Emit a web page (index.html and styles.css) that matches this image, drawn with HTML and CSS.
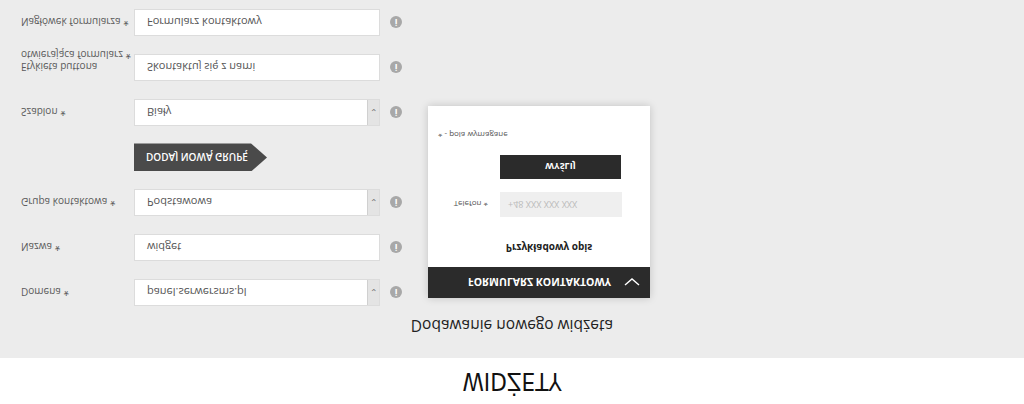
FILE: index.html
```html
<!DOCTYPE html>
<html lang="pl">
<head>
    <meta charset="UTF-8">
    <meta name="viewport" content="width=device-width, initial-scale=1.0">
    <title>Widżety</title>
    <link rel="stylesheet" href="styles.css">
</head>
<body>
    <div class="page">
        <header class="top">
            <h1>WIDŻETY</h1>
        </header>

        <section class="panel">
            <h2>Dodawanie nowego widżeta</h2>

            <div class="content">
                <div class="form">
                    <div class="row">
                        <label>Domena <span class="req">*</span></label>
                        <div class="field select">
                            <span>panel.serwersms.pl</span>
                            <span class="arrow">&#8964;</span>
                        </div>
                        <span class="info">i</span>
                    </div>
                    <div class="row">
                        <label>Nazwa <span class="req">*</span></label>
                        <div class="field"><span>widget</span></div>
                        <span class="info">i</span>
                    </div>
                    <div class="row">
                        <label>Grupa kontaktowa <span class="req">*</span></label>
                        <div class="field select">
                            <span>Podstawowa</span>
                            <span class="arrow">&#8964;</span>
                        </div>
                        <span class="info">i</span>
                    </div>
                    <div class="row">
                        <label></label>
                        <button class="add-group">DODAJ NOWĄ GRUPĘ</button>
                    </div>
                    <div class="row">
                        <label>Szablon <span class="req">*</span></label>
                        <div class="field select">
                            <span>Biały</span>
                            <span class="arrow">&#8964;</span>
                        </div>
                        <span class="info">i</span>
                    </div>
                    <div class="row">
                        <label class="two-lines">Etykieta buttona<br>otwierająca formularz <span class="req">*</span></label>
                        <div class="field"><span>Skontaktuj się z nami</span></div>
                        <span class="info">i</span>
                    </div>
                    <div class="row">
                        <label>Nagłówek formularza <span class="req">*</span></label>
                        <div class="field"><span>Formularz kontaktowy</span></div>
                        <span class="info">i</span>
                    </div>
                </div>

                <div class="preview">
                    <div class="preview-head">
                        <span>FORMULARZ KONTAKTOWY</span>
                        <svg width="16" height="10" viewBox="0 0 16 10"><polyline points="1,2 8,8 15,2" fill="none" stroke="#fff" stroke-width="1.4"/></svg>
                    </div>
                    <p class="desc">Przykładowy opis</p>
                    <div class="preview-row phone-row">
                        <span class="small-label">Telefon *</span>
                        <div class="phone">+48 XXX XXX XXX</div>
                    </div>
                    <div class="preview-row">
                        <span class="small-label"></span>
                        <button class="send">WYŚLIJ</button>
                    </div>
                    <p class="required">* - pola wymagane</p>
                </div>
            </div>
        </section>
    </div>
</body>
</html>
```

FILE: styles.css
```css
body {
    margin: 0;
    font-family: "Open Sans", Arial, sans-serif;
    background: #ececec;
}
.page {
    width: 1024px;
    height: 404px;
    overflow: hidden;
    transform: scaleY(-1);
    background: #ececec;
}
.top {
    height: 46px;
    background: #fff;
    display: flex;
    justify-content: center;
    align-items: center;
}
.top h1 {
    margin: 0;
    font-family: "Liberation Sans Narrow", "DejaVu Sans Condensed", sans-serif;
    font-weight: normal;
    font-size: 24px;
    color: #111;
}
.panel {
    padding-top: 20px;
}
.panel h2 {
    margin: 0;
    text-align: center;
    font-weight: normal;
    font-size: 15.5px;
    line-height: 24px;
    color: #222;
}
.content {
    display: flex;
    margin-top: 8px;
    padding-left: 21px;
}
.form {
    display: flex;
    flex-direction: column;
    gap: 18px;
}
.row {
    display: flex;
    align-items: center;
    height: 27px;
}
.row label {
    width: 113px;
    font-size: 10px;
    color: #5a5a5a;
    line-height: 12px;
    white-space: nowrap;
}
.row label.two-lines {
    margin-top: 12px;
}
.req {
    font-size: 10px;
}
.field {
    width: 246px;
    height: 27px;
    box-sizing: border-box;
    background: #fff;
    border: 1px solid #dcdcdc;
    display: flex;
    align-items: center;
    padding-left: 12px;
    font-size: 11px;
    color: #555;
}
.field span:first-child {
    flex: 1;
}
.select .arrow {
    width: 11px;
    height: 25px;
    background: #e4e4e4;
    border-left: 1px solid #d0d0d0;
    font-size: 9px;
    color: #777;
    display: flex;
    align-items: center;
    justify-content: center;
    line-height: 1;
}
.info {
    width: 12px;
    height: 12px;
    margin-left: 10px;
    border-radius: 50%;
    background: #a8a8a8;
    color: #fff;
    font-size: 9px;
    font-weight: bold;
    display: flex;
    align-items: center;
    justify-content: center;
}
.add-group {
    width: 133px;
    height: 28px;
    border: none;
    padding: 0 16px 0 12px;
    background: #4a4a4a;
    color: #fff;
    font-family: "Open Sans", Arial, sans-serif;
    font-size: 10px;
    font-weight: 600;
    text-align: left;
    clip-path: polygon(0 0, 88% 0, 100% 50%, 88% 100%, 0 100%);
}
.preview {
    width: 222px;
    height: 192px;
    margin-left: 26px;
    margin-top: 8px;
    background: #fff;
    box-shadow: 0 0 8px rgba(0, 0, 0, 0.18);
}
.preview-head {
    height: 31px;
    background: #2b2b2b;
    color: #fff;
    display: flex;
    align-items: center;
    padding-left: 40px;
    padding-right: 10px;
    font-size: 10.5px;
    font-weight: bold;
}
.preview-head span {
    flex: 1;
}
.desc {
    margin: 12px 0 0;
    text-align: center;
    font-size: 10px;
    font-weight: bold;
    color: #222;
    padding-left: 20px;
}
.preview-row {
    display: flex;
    align-items: center;
    margin-top: 13px;
}
.preview-row.phone-row {
    margin-top: 24px;
}
.small-label {
    width: 60px;
    text-align: right;
    padding-right: 12px;
    font-size: 8px;
    color: #555;
}
.phone {
    width: 122px;
    height: 25px;
    background: #efefef;
    display: flex;
    align-items: center;
    padding-left: 8px;
    box-sizing: border-box;
    font-size: 9px;
    color: #bbb;
}
.send {
    width: 121px;
    height: 24px;
    border: none;
    background: #2b2b2b;
    color: #fff;
    font-family: "Open Sans", Arial, sans-serif;
    font-size: 9px;
    font-weight: bold;
}
.required {
    margin: 14px 0 0 10px;
    font-size: 8px;
    color: #555;
}
```
